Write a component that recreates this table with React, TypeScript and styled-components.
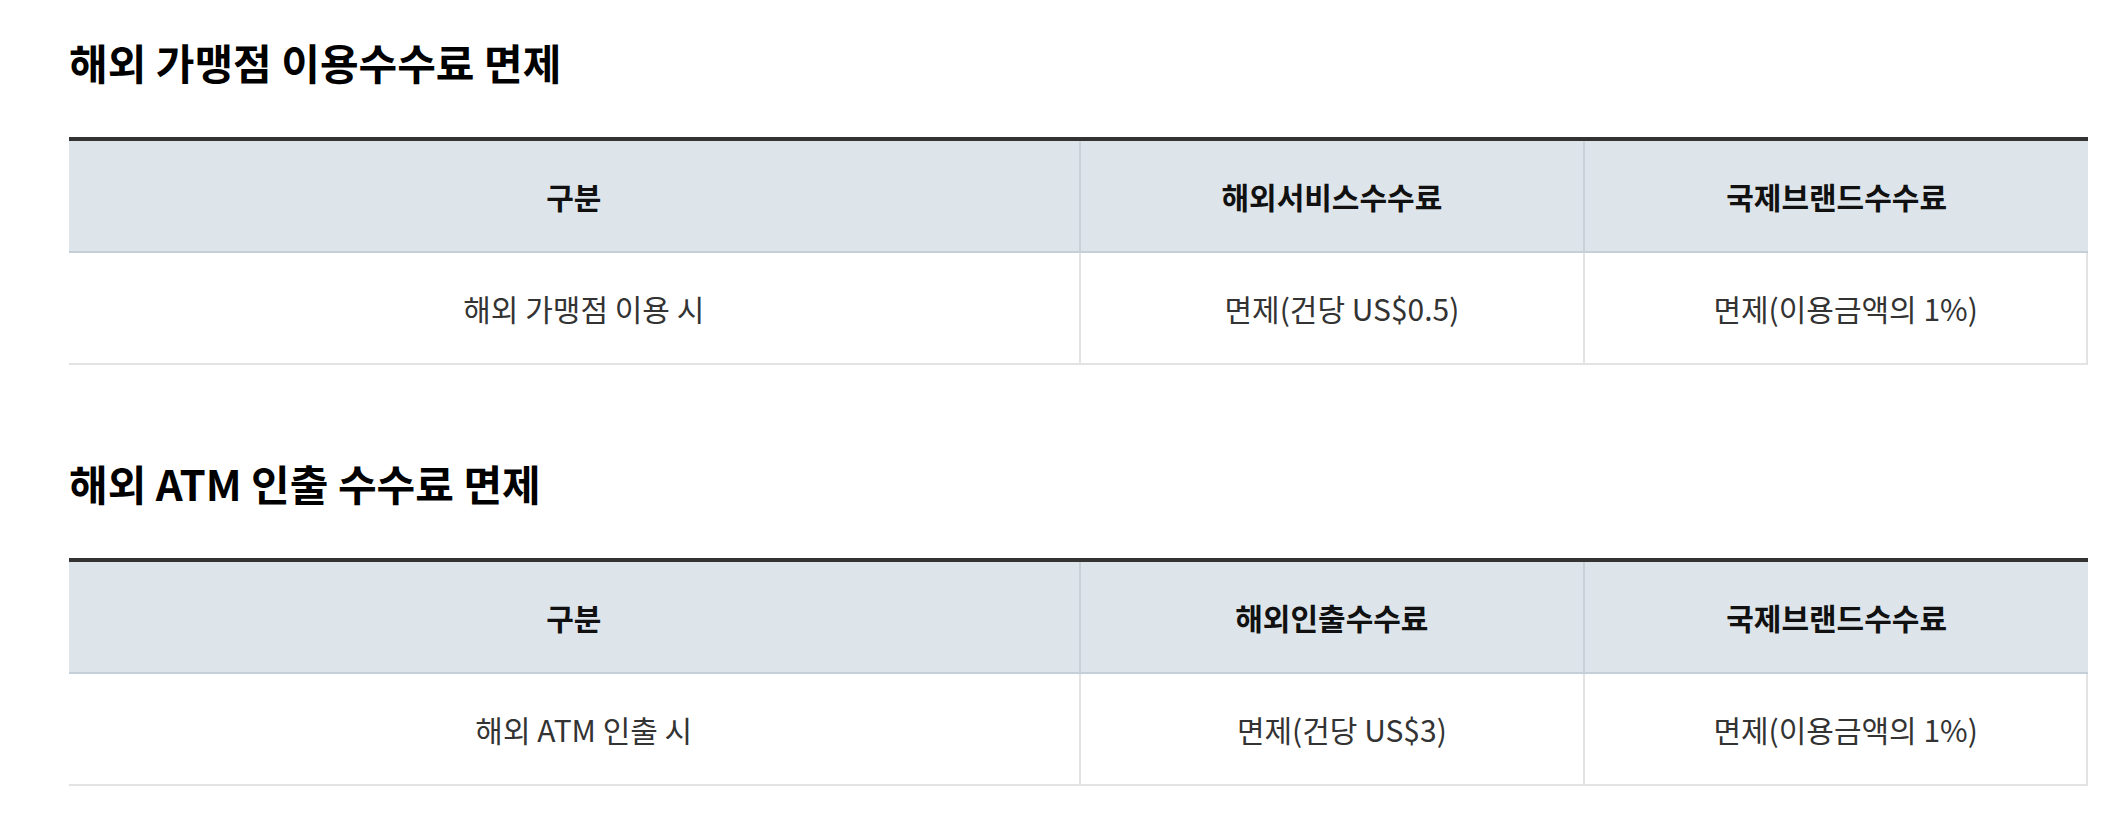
import * as React from "react";
import styled, { createGlobalStyle } from "styled-components";

const GlobalStyle = createGlobalStyle`
  html, body {
    margin: 0;
    padding: 0;
    background: #ffffff;
  }
  body {
    font-family: "Noto Sans CJK KR", "Noto Sans", sans-serif;
  }
`;

const Page = styled.div`
  padding: 38px 32px 0 69px;
`;

const Section = styled.section<{ $first?: boolean }>`
  margin-top: ${(p) => (p.$first ? "0" : "94px")};
`;

const Title = styled.h2`
  margin: 0;
  font-size: 42px;
  line-height: 48px;
  font-weight: 700;
  letter-spacing: 0;
  color: #000000;
`;

const Table = styled.div`
  margin-top: 51px;
`;

const Row = styled.div`
  display: grid;
  grid-template-columns: 2fr 1fr 1fr;
`;

const HeadRow = styled(Row)`
  border-top: 4px solid #333333;
  border-bottom: 2px solid #c4cfd7;
  background: #dde5eb;
`;

const BodyRow = styled(Row)`
  border-bottom: 2px solid #e3e3e3;
`;

const HeadCell = styled.div`
  height: 110px;
  display: flex;
  align-items: center;
  justify-content: center;
  font-size: 30px;
  font-weight: 700;
  color: #111111;

  & + & {
    border-left: 2px solid #c8d2da;
  }
`;

const BodyCell = styled.div`
  height: 110px;
  display: flex;
  align-items: center;
  justify-content: center;
  padding-left: 20px;
  font-size: 30px;
  font-weight: 400;
  color: #333333;

  & + & {
    border-left: 2px solid #e3e3e3;
  }
  &:last-child {
    border-right: 2px solid #e3e3e3;
  }
`;

type FeeTable = {
  title: string;
  heads: string[];
  cells: string[];
};

const tables: FeeTable[] = [
  {
    title: "해외 가맹점 이용수수료 면제",
    heads: ["구분", "해외서비스수수료", "국제브랜드수수료"],
    cells: ["해외 가맹점 이용 시", "면제(건당 US$0.5)", "면제(이용금액의 1%)"],
  },
  {
    title: "해외 ATM 인출 수수료 면제",
    heads: ["구분", "해외인출수수료", "국제브랜드수수료"],
    cells: ["해외 ATM 인출 시", "면제(건당 US$3)", "면제(이용금액의 1%)"],
  },
];

export default function App() {
  return (
    <>
      <GlobalStyle />
      <Page>
        {tables.map((t, i) => (
          <Section key={t.title} $first={i === 0}>
            <Title>{t.title}</Title>
            <Table>
              <HeadRow>
                {t.heads.map((h) => (
                  <HeadCell key={h}>{h}</HeadCell>
                ))}
              </HeadRow>
              <BodyRow>
                {t.cells.map((c) => (
                  <BodyCell key={c}>{c}</BodyCell>
                ))}
              </BodyRow>
            </Table>
          </Section>
        ))}
      </Page>
    </>
  );
}
